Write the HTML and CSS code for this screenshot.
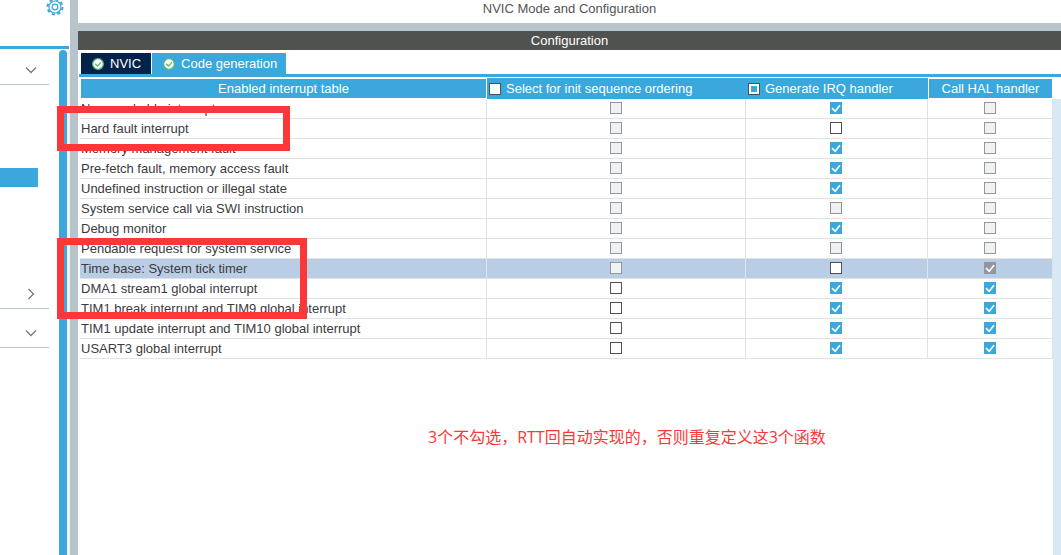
FILE: index.html
```html
<!DOCTYPE html>
<html lang="en">
<head>
<meta charset="utf-8">
<title>NVIC Mode and Configuration</title>
<link rel="stylesheet" href="styles.css">
</head>
<body>
<div class="app">
  <aside class="sidebar">
    <header class="sidebar-head">
      <button class="icon-button" aria-label="Settings">
        <svg width="18" height="18" viewBox="0 0 18 18" fill="none" stroke="#3aa8dc">
          <circle cx="9" cy="9" r="7.500" stroke-width="2" stroke-dasharray="3.200 2.690"/>
          <circle cx="9" cy="9" r="6" stroke-width="1.200"/>
          <circle cx="9" cy="9" r="2.800" stroke-width="1.300"/>
        </svg>
      </button>
    </header>
    <div class="sidebar-body">
      <nav class="categories" aria-label="Categories">
        <button class="category" aria-label="Expand system core"><svg class="chevron" viewBox="0 0 12 12"><path d="M1 3.500l5 5 5-5"/></svg></button>
        <div class="category-items"><div class="selected-item"></div></div>
        <button class="category next" aria-label="Expand analog"><svg class="chevron" viewBox="0 0 12 12"><path d="M3.500 1l5 5-5 5"/></svg></button>
        <button class="category last" aria-label="Expand timers"><svg class="chevron" viewBox="0 0 12 12"><path d="M1 3.500l5 5 5-5"/></svg></button>
      </nav>
      <div class="scroll-thumb"></div>
    </div>
  </aside>
  <div class="splitter"></div>
  <main class="main">
    <h1 class="mode-title">NVIC Mode and Configuration</h1>
    <h2 class="config-title">Configuration</h2>
    <div class="tabs">
      <button class="tab active"><svg class="ok" viewBox="0 0 12 12"><circle cx="6" cy="6" r="5.300"/><path d="M3.200 5.700l2.200 2.300 3.500-3.600"/></svg>NVIC</button>
      <button class="tab"><svg class="ok" viewBox="0 0 12 12"><circle cx="6" cy="6" r="5.300"/><path d="M3.200 5.700l2.200 2.300 3.500-3.600"/></svg>Code generation</button>
    </div>
    <div class="table-area">
      <table class="interrupts">
        <colgroup><col><col class="col-init"><col class="col-irq"><col class="col-hal"></colgroup>
        <thead>
          <tr>
            <th class="plain">Enabled interrupt table</th>
            <th class="pick"><label><input type="checkbox">Select for init sequence ordering</label></th>
            <th class="pick"><label><input type="checkbox" class="mixed">Generate IRQ handler</label></th>
            <th class="plain">Call HAL handler</th>
          </tr>
        </thead>
        <tbody id="rows"></tbody>
      </table>
      <div class="gutter"></div>
    </div>
  </main>
  <div class="mark mark-fault"></div>
  <div class="mark mark-tick"></div>
  <p class="note" lang="zh-CN">3个不勾选，RTT回自动实现的，否则重复定义这3个函数</p>
</div>
<script src="table.js"></script>
</body>
</html>
```
FILE: styles.css
```css
* { box-sizing: border-box; }
body {
  margin: 0;
  background: #fff;
  color: #3b3b40;
  font: 13px/18px "Liberation Sans", Arial, sans-serif;
}
button { margin: 0; padding: 0; border: 0; background: none; font: inherit; }
.app {
  position: relative;
  display: grid;
  grid-template-columns: 70px 8px minmax(0, 1fr);
  min-height: 100vh;
}

/* Sidebar */
.sidebar { display: flex; flex-direction: column; }
.sidebar-head {
  height: 49px;
  margin-right: 1px;
  padding: 0 5px 0 0;
  border-bottom: 3px solid #3aa8dc;
  text-align: right;
}
.icon-button { margin-top: -2px; height: 18px; }
.icon-button svg { display: block; }
.sidebar-body {
  flex: 1;
  display: grid;
  grid-template-columns: 1fr 8px;
  padding-top: 1px;
  border-right: 3px solid #f2f2f2;
}
.scroll-thumb { background: #3aa8dc; border-radius: 4px 4px 0 0; }
.categories { padding-right: 10px; }
.category {
  display: flex;
  align-items: center;
  justify-content: flex-end;
  width: 100%;
  height: 35px;
  padding: 6px 12px 0 0;
  border-bottom: 1px solid #b8c4cb;
}
.category.next { height: 34px; padding-top: 5px; }
.category.last { height: 39px; padding-top: 10px; }
.category-items { height: 190px; padding-top: 83px; }
.selected-item { height: 19px; margin-right: 11px; background: #3aa8dc; }
.chevron { width: 12px; height: 12px; fill: none; stroke: #777; stroke-width: 1.3; }
.splitter { background: #b8c4cb; }

/* Main panel */
.main { display: flex; flex-direction: column; }
.mode-title, .config-title {
  margin: 0;
  font-size: 13px;
  font-weight: 400;
  line-height: 19px;
  text-align: center;
}
.mode-title { height: 31px; border-bottom: 8px solid #b8c4cb; line-height: 17px; color: #555; }
.config-title { background: #505250; color: #fff; }
.tabs {
  display: flex;
  gap: 1px;
  margin-left: 1px;
  padding: 3px 0 0 2px;
  border-bottom: 3px solid #3aa8dc;
}
.tab {
  display: flex;
  align-items: center;
  gap: 6px;
  height: 21px;
  padding: 0 9px 0 11px;
  background: #3aa8dc;
  color: #fff;
}
.tab.active { padding-right: 10px; background: #03234b; }
.ok { width: 12px; height: 12px; fill: #fff; stroke: #5bb974; stroke-width: 1.3; }
.table-area { flex: 1; display: flex; padding: 1px 0 0 2px; }
.gutter { width: 8px; margin-top: 21px; background: #d9e8f5; }

.interrupts {
  flex: 1;
  align-self: flex-start;
  table-layout: fixed;
  border-collapse: separate;
  border-spacing: 0;
}
.col-init { width: 259px; }
.col-irq { width: 182px; }
.col-hal { width: 125px; }
.interrupts th {
  height: 21px;
  padding: 0;
  background: #3aa8dc;
  color: #fff;
  font-weight: 400;
}
.interrupts .plain { border: 1px solid #fff; }
.interrupts .pick { text-align: left; }
.pick label { display: flex; align-items: center; gap: 5px; padding-left: 2px; }
.interrupts td {
  height: 20px;
  padding: 0 1px 1px 0;
  border-right: 1px solid #dfe3e6;
  border-bottom: 1px solid #dfe3e6;
  text-align: center;
}
.interrupts td:first-child {
  padding: 0 0 0 1px;
  line-height: 19px;
  text-align: left;
  white-space: nowrap;
}
.current td { background: #b9cee5; }

input[type="checkbox"] {
  appearance: none;
  display: block;
  flex: none;
  width: 12px;
  height: 12px;
  margin: 0 auto;
  border: 1px solid #505055;
  background: #fff;
}
.pick input[type="checkbox"] { margin: 0; }
.pick input.mixed { background: #3aa8dc; box-shadow: inset 0 0 0 2px #fff; }
.check { position: relative; display: block; width: 12px; height: 12px; margin: 0 auto; }
.check input:disabled { border-color: #92979c; background: #f0f1f3; }
.check input:checked { border-color: #3aa8dc; background: #3aa8dc; }
.check input:checked:disabled { border-color: #92979c; background: #92979c; }
.check svg {
  position: absolute;
  inset: 0;
  display: none;
  fill: none;
  stroke: #fff;
  stroke-width: 1.7;
  pointer-events: none;
}
.check input:checked + svg { display: block; }

/* Annotations drawn over the panels */
.mark { position: absolute; left: 57px; border: 7px solid #fb3737; }
.mark-fault { top: 106px; width: 233px; height: 45px; }
.mark-tick { top: 238px; width: 250px; height: 81px; }
.note {
  position: absolute;
  top: 425px;
  left: 428px;
  margin: 0;
  color: #fb3737;
  font: 16px/24px "Open Sans", "Noto Sans CJK SC", sans-serif;
  white-space: nowrap;
}
```
FILE: table.js
```js
// States: d = disabled, u = unchecked, c = checked, x = checked and disabled
const interrupts = [
  ["Non maskable interrupt", "dcd"],
  ["Hard fault interrupt", "dud"],
  ["Memory management fault", "dcd"],
  ["Pre-fetch fault, memory access fault", "dcd"],
  ["Undefined instruction or illegal state", "dcd"],
  ["System service call via SWI instruction", "ddd"],
  ["Debug monitor", "dcd"],
  ["Pendable request for system service", "ddd"],
  ["Time base: System tick timer", "dux"],
  ["DMA1 stream1 global interrupt", "ucc"],
  ["TIM1 break interrupt and TIM9 global interrupt", "ucc"],
  ["TIM1 update interrupt and TIM10 global interrupt", "ucc"],
  ["USART3 global interrupt", "ucc"]
];
const columns = ["init sequence ordering", "IRQ handler", "HAL handler"];
const tick = '<svg width="12" height="12" viewBox="0 0 12 12"><path d="M2 6.200l3.200 3.100 4.800-6"/></svg>';
const box = (name, state, i) => {
  const checked = "cx".includes(state) ? " checked" : "";
  const disabled = "dx".includes(state) ? " disabled" : "";
  return `<td><label class="check"><input type="checkbox" aria-label="${name}: ${columns[i]}"${checked}${disabled}>${tick}</label></td>`;
};
document.getElementById("rows").innerHTML = interrupts.map(([name, states]) =>
  `<tr${name.startsWith("Time base") ? ' class="current"' : ""}><td>${name}</td>${[...states].map((s, i) => box(name, s, i)).join("")}</tr>`
).join("");
```
